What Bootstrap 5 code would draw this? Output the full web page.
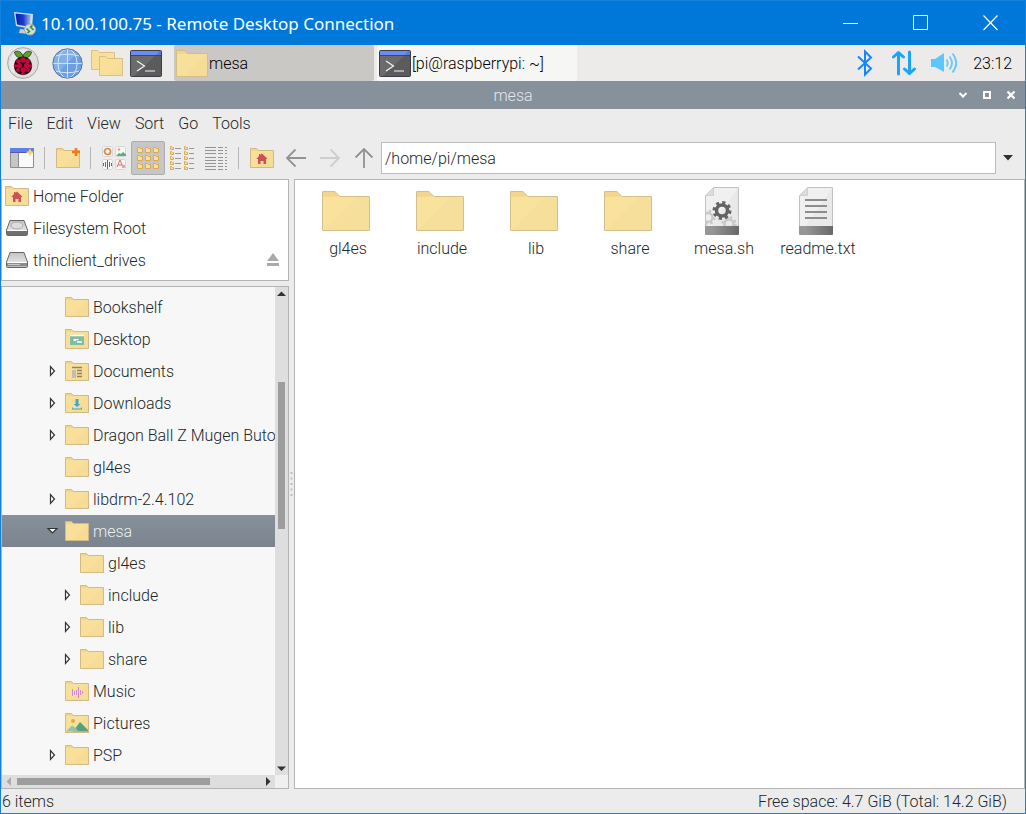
<!DOCTYPE html>
<html lang="en">
<head>
<meta charset="utf-8">
<meta name="viewport" content="width=device-width, initial-scale=1">
<title>10.100.100.75 - Remote Desktop Connection</title>
<link href="https://cdn.jsdelivr.net/npm/bootstrap@5.3.0/dist/css/bootstrap.min.css" rel="stylesheet">
<style>
body { font: 300 16px/21px Roboto, sans-serif; color: #222729; background: #ececec; }
button { font: inherit; color: inherit; border: 0; background: none; padding: 0; }
svg { display: block; flex: none; }
.rdp-window { height: 100vh; min-height: 480px; border: 1px solid #1482dc; }
.rdp-title { height: 44px; gap: 5px; padding-left: 11px; background: #0078d9; color: #fff; font: 400 17px/25px "Noto Sans", "Open Sans", sans-serif; }
.rdp-title button { width: 70px; height: 44px; }
.taskbar { height: 36px; background: #edebe9; color: #000; }
.launchers { gap: 7px; padding: 0 12px 0 6px; }
.launchers .globe { margin: 0 1px 0 6px; }
.tasks { gap: 3px; }
.task { width: 200px; height: 36px; gap: 1px; padding-left: 2px; background: #f6f6f4; border-radius: 2px; }
.task-on { background: #cac8c4; }
.tray { gap: 15px; padding-right: 13px; }
.fm-title { height: 28px; background: #87919b; color: #e4e6e8; }
.fm-controls { right: 2px; top: 0; }
.fm-controls button { width: 24px; height: 28px; }
.menus { height: 28px; }
.menus button { padding: 0 7px; }
.tools { height: 42px; padding-left: 4px; }
.tool { width: 34px; height: 34px; border: 1px solid transparent; border-radius: 2px; }
.tool-on { background: #c6c6c6; border-color: #adadad; }
.rule { width: 1px; height: 22px; background: #b5b5b5; margin: 0 6px 0 5px; }
.path-box { height: 32px; padding: 0 3px; border: 1px solid #bcbcbc; border-radius: 0; background: #fff; color: #222729; font: inherit; line-height: 20px; outline: 0; min-width: 0; }
.path-menu { width: 29px; height: 32px; padding-right: 5px; }
.work { min-height: 0; }
.side { width: 288px; gap: 5px; }
.pane { border: 1px solid #b4b4b4; }
.places { height: 102px; background: #fff; }
.place { height: 32px; gap: 4px; padding-left: 3px; text-align: left; }
.tree { min-height: 0; background: #f7f7f7; }
.branches { padding-top: 4px; }
.node { height: 32px; width: 100%; gap: 4px; padding-left: 43px; white-space: nowrap; }
.node-sub { padding-left: 58px; }
.node-on { background: linear-gradient(#87919b, #7a838e); color: #eceeef; }
.scroll-v { width: 13px; background: #dedede; }
.scroll-h { height: 13px; background: #dedede; }
.corner { width: 13px; background: #f0f0f0; }
.arrow-cell { width: 13px; height: 13px; }
.thumb-v { width: 7px; background: #9d9d9d; }
.thumb-h { height: 7px; background: #9d9d9d; }
.grip { width: 5px; }
.files { background: #fff; padding: 7px 6px; }
.file { width: 94px; gap: 3px; }
.file svg { margin-right: 4px; }
.status { height: 24px; padding: 0 18px 0 1px; }
</style>
</head>
<body>
<svg width="0" height="0" class="position-absolute" aria-hidden="true">
  <defs>
    <linearGradient id="paper" x1="0" y1="0" x2="1" y2="1"><stop offset=".5" stop-color="#f0f0f0"/><stop offset=".5" stop-color="#e9e9e9"/></linearGradient>
    <linearGradient id="foot"><stop offset=".2" stop-color="#969696"/><stop offset="1" stop-color="#686868"/></linearGradient>
    <linearGradient id="metal" x1="0" y1="0" x2="0" y2="1"><stop offset="0" stop-color="#c4c4c4"/><stop offset="1" stop-color="#f2f2f2"/></linearGradient>
    <linearGradient id="screen" x1="0" y1="0" x2="1" y2="0"><stop offset="0" stop-color="#0a1fb0"/><stop offset=".5" stop-color="#1c39c9"/><stop offset="1" stop-color="#9fc4f4"/></linearGradient>
    <clipPath id="sheet"><path d="M8 0h32v39H8z"/></clipPath>
  </defs>
  <symbol id="folder" viewBox="0 0 24 20">
    <path d="M.5 19.5V.5h6l2 2h15v17z" fill="#f8e09a"/><path d="M.5 3V.5h6l2.500 2.500z" fill="#f3d58c"/><path d="M6 19.500L22.500 3h1v16.500z" fill="#f5dc97"/><path d="M.5 19.500V.5h6l2 2h15v17z" fill="none" stroke="#d3b985"/>
  </symbol>
  <symbol id="folder-lg" viewBox="0 0 48 48">
    <path d="M.5 43V5q0-.5.5-.5h11q1 0 2 1l4 4h29q.5 0 .5.500v33q0 .5-.5.500H1q-.5 0-.5-.5z" fill="#f9e39c"/><path d="M.5 10V4.500h12l5 5z" fill="#f3d58c"/><path d="M2 43L36 9.500h11.500v34z" fill="#f6df9a"/><path d="M.5 43V5q0-.5.5-.5h11q1 0 2 1l4 4h29q.5 0 .5.500v33q0 .5-.5.500H1q-.5 0-.5-.5z" fill="none" stroke="#d3bf8d"/>
  </symbol>
  <symbol id="home" viewBox="0 0 24 20">
    <use href="#folder" width="24" height="20"/><path d="M12 5.500l5.700 5.500H16v5h-2.500v-3h-3v3H8v-5H6.300L9 8V6h1.500v1z" fill="#cc5256"/>
  </symbol>
  <symbol id="term" viewBox="0 0 32 27">
    <rect x=".5" y=".5" width="31" height="26" rx="1" fill="#5b5b5b"/><path d="M1 26V5h25L4 26z" fill="#6b6b6b"/><path d="M1 1h30v4H1z" fill="#5878dc"/><path d="M1 1h28l-3 4H1z" fill="#6a8cf4"/><path d="M.5 5.500h31" stroke="#46464e"/><rect x=".5" y=".5" width="31" height="26" rx="1" fill="none" stroke="#3b3d48"/><path d="M7 11l7.500 5L7 21M15 21h10" fill="none" stroke="#f4f4f4" stroke-width="1.200"/>
  </symbol>
  <symbol id="drive" viewBox="0 0 24 18">
    <path d="M5 1.500h14l3.500 9.500v4.500q0 1-1 1h-19q-1 0-1-1V11z" fill="url(#metal)" stroke="#666"/><path d="M2 11.500h20v4H2z" fill="#8b8b8b"/><path d="M2 11.500h20" stroke="#fff"/><path d="M3 13.500h12" stroke="#c8c8c8"/>
  </symbol>
  <symbol id="closed" viewBox="0 0 16 14"><path d="M5.500 2.500v9l4-4.500z" fill="#fff" stroke="#303436" stroke-width="1.200"/></symbol>
  <symbol id="open" viewBox="0 0 16 14"><path d="M3 4.500h9L7.500 9z" fill="#fff" stroke="#303436" stroke-width="1.200"/></symbol>
  <symbol id="page" viewBox="0 0 48 48">
    <path d="M7.500 47V8.500l8-8h25V47z" fill="url(#paper)" stroke="#c2c2c2"/><path d="M7.500 8.500h8v-8z" fill="#dcdcdc" stroke="#cfcfcf"/><path d="M7 39h34v8q0 1-1 1H8q-1 0-1-1z" fill="url(#foot)"/>
  </symbol>
</svg>

<div class="rdp-window d-flex flex-column overflow-hidden">
  <header class="rdp-title d-flex align-items-center flex-shrink-0">
    <svg width="24" height="26" viewBox="0 0 24 26">
      <path d="M2 2l19 2-1 15L4 16z" fill="#d8dde6"/><path d="M3.500 3.500L19 5l-1.500 12L5 14.500z" fill="url(#screen)"/><path d="M8 19l8 1 1 4-10-1z" fill="#c8ccd2"/><circle cx="18" cy="19.500" r="5.500" fill="#d7dcd8" stroke="#a5aaa8"/><path d="M14.500 18.500l3 3-2 1.500M21.500 20l-3-3 2-1.500" fill="none" stroke="#2f9a3c" stroke-width="1.600"/>
    </svg>
    <span class="flex-fill">10.100.100.75 - Remote Desktop Connection</span>
    <div class="d-flex">
      <button class="d-flex align-items-center justify-content-center" aria-label="Minimize"><svg width="15" height="16"><path d="M0 8.500h15" stroke="#fff"/></svg></button>
      <button class="d-flex align-items-center justify-content-center" aria-label="Maximize"><svg width="15" height="16"><path d="M.5.5h14v14H.5z" fill="none" stroke="#fff"/></svg></button>
      <button class="d-flex align-items-center justify-content-center" aria-label="Close"><svg width="15" height="16"><path d="M.5.5l14 14.500M14.500 .5L.5 15" fill="none" stroke="#fff" stroke-width="1.100"/></svg></button>
    </div>
  </header>

  <nav class="taskbar d-flex align-items-center flex-shrink-0" aria-label="Panel">
    <div class="launchers d-flex align-items-center">
    <button aria-label="Menu"><svg width="32" height="32" viewBox="0 0 32 32">
      <circle cx="16" cy="16" r="15.400" fill="#dedede" stroke="#a9a9a9"/><path d="M5.500 26.500A15 15 0 0 1 26.500 5.500z" fill="#e9e9e9"/>
      <path d="M16 9C14 3 9 4 7.500 5 8 9 11 11.500 15.500 10.500zM16 9c2-6 7-5 8.500-4-.5 4-3.500 6.500-8 5.500z" fill="#5f9d35" stroke="#1c2b10" stroke-width=".7"/>
      <path d="M16 9.500c5 0 9 4 9 9.500s-4 9-9 9-9-3.500-9-9 4-9.500 9-9.500z" fill="#230912"/>
      <g fill="#c7053d"><circle cx="16" cy="13" r="2.800"/><circle cx="11.300" cy="14.200" r="2.200"/><circle cx="20.700" cy="14.200" r="2.200"/><circle cx="12.500" cy="18.500" r="2.600"/><circle cx="19.500" cy="18.500" r="2.600"/><circle cx="8.500" cy="19" r="1.800"/><circle cx="23.500" cy="19" r="1.800"/><circle cx="16" cy="22.800" r="2.500"/><circle cx="11" cy="23" r="2"/><circle cx="21" cy="23" r="2"/><circle cx="16" cy="26.500" r="1.700"/></g>
    </svg></button>
    <button class="globe" aria-label="Web browser"><svg width="31" height="31" viewBox="0 0 31 31">
      <circle cx="15.500" cy="15.500" r="14.500" fill="#6c9fdf"/><path d="M5 25.500A14.500 14.500 0 0 1 25.500 5z" fill="#82b1e9"/><g fill="none" stroke="#d4e4f7"><path d="M15.500 1v29M1 15.500h29M3.500 8q12-3.500 24 0M3.500 23q12 3.500 24 0"/><ellipse cx="15.500" cy="15.500" rx="9.500" ry="14.500"/></g><circle cx="15.500" cy="15.500" r="14.700" fill="none" stroke="#53749f"/>
    </svg></button>
    <button aria-label="File manager"><svg width="32" height="26" viewBox="0 0 32 26"><path d="M.5 19.500V.5h6l2 2h15v17z" fill="#f8e09a" stroke="#d9c08a"/><path d="M8.500 25.500v-19h6l2 2h15v17z" fill="#f8e09a" stroke="#d9c08a"/><path d="M17 25L31 11v14z" fill="#f5dc97"/></svg></button>
    <button aria-label="Terminal"><svg width="32" height="27"><use href="#term"/></svg></button>
    </div>
    <div class="tasks d-flex">
      <button class="task task-on d-flex align-items-center"><svg width="32" height="27" viewBox="0 0 32 27"><path d="M.5 26.500V.5h8l3 3h20v23z" fill="#f8e09a"/><path d="M.5 4V.5h8l3 3.500z" fill="#f3d58c"/><path d="M8 26L30 4h1v22z" fill="#f5dc97"/><path d="M.5 26.500V.5h8l3 3h20v23z" fill="none" stroke="#d3bd88"/></svg>mesa</button>
      <button class="task d-flex align-items-center"><svg width="32" height="27"><use href="#term"/></svg>[pi@raspberrypi: ~]</button>
    </div>
    <div class="tray d-flex align-items-center ms-auto">
      <button aria-label="Bluetooth"><svg width="21" height="28" viewBox="0 0 21 28"><path d="M2 7.500l13 12-6 6V2.500l6 6-13 12" fill="none" stroke="#1187fb" stroke-width="2"/></svg></button>
      <button aria-label="Network"><svg width="24" height="26" viewBox="1 0 24 26"><g fill="none" stroke="#18a5ff" stroke-width="3" stroke-linecap="round" stroke-linejoin="round"><path d="M7.500 24V2.500M2.500 7l5-4.500 5 4.500M18.500 2v21.500M13.500 19l5 4.500 5-4.500"/></g></svg></button>
      <button aria-label="Volume"><svg width="27" height="22" viewBox="2 0 27 22"><path d="M2 7h4l9-6v19l-9-5H2z" fill="#5bc7fd"/><g fill="none" stroke="#66caff" stroke-width="1.800"><path d="M17.500 7.500q2.500 3.500 0 7M20.500 4.500q5 6.500 0 13M23.500 1.500q7.500 9.500 0 19"/></g></svg></button>
      <time>23:12</time>
    </div>
  </nav>

  <div class="fm-title position-relative d-flex align-items-center justify-content-center flex-shrink-0">mesa
    <div class="fm-controls position-absolute d-flex">
      <button class="d-flex align-items-center justify-content-center" aria-label="Iconify"><svg width="10" height="10"><path d="M1.500 3L5 6.500 8.500 3" fill="none" stroke="#fff" stroke-width="2"/></svg></button>
      <button class="d-flex align-items-center justify-content-center" aria-label="Maximize window"><svg width="10" height="10"><path d="M2 2h6v6H2z" fill="none" stroke="#fff" stroke-width="2"/></svg></button>
      <button class="d-flex align-items-center justify-content-center" aria-label="Close window"><svg width="10" height="10"><path d="M1.500 1.500l7 7M8.500 1.500l-7 7" stroke="#fff" stroke-width="2.300"/></svg></button>
    </div>
  </div>

  <nav class="menus d-flex align-items-center flex-shrink-0" aria-label="Menu bar">
    <button>File</button><button>Edit</button><button>View</button><button>Sort</button><button>Go</button><button>Tools</button>
  </nav>

  <div class="tools d-flex align-items-center flex-shrink-0" role="toolbar">
    <button class="tool d-flex align-items-center justify-content-center" aria-label="New window"><svg width="24" height="20" viewBox="0 0 24 20"><path d="M.5.5h23v19H.5z" fill="#fafafa" stroke="#8d8d8d"/><path d="M1 5h7v14H1z" fill="#c6c6c6"/><path d="M8.500 5v14" stroke="#8f8f8f"/><path d="M0 0h24v4.500H0z" fill="#5f7fea"/><path d="M0 4.500h24" stroke="#4d5da8"/><path d="M20 0l1.200 3 3 1.200-3 1.200L20 8.500l-1.200-3.100-3-1.200 3-1.200z" fill="#f8cf64"/></svg></button>
    <div class="rule"></div>
    <button class="tool d-flex align-items-center justify-content-center" aria-label="New folder"><svg width="24" height="20" viewBox="0 0 24 20"><use href="#folder"/><path d="M20 0v8M16 4h8" stroke="#f47a16" stroke-width="2.600"/></svg></button>
    <div class="rule"></div>
    <button class="tool d-flex align-items-center justify-content-center" aria-label="Thumbnail view"><svg width="24" height="24" viewBox="0 0 24 24"><g fill="#f5f5f5" stroke="#d7d7d7"><rect x=".5" y=".5" width="10" height="10" rx="1"/><rect x="13.500" y=".5" width="10" height="10" rx="1"/><rect x=".5" y="13.500" width="10" height="10" rx="1"/><rect x="13.500" y="13.500" width="10" height="10" rx="1"/></g><circle cx="5.500" cy="5.500" r="3" fill="none" stroke="#d9894a" stroke-width="1.700"/><path d="M14 10l3-3 2 1 2-2 3 2.500V10z" fill="#5daa88"/><circle cx="17" cy="3.500" r="1.200" fill="#e2a94c"/><path d="M1.500 17v3M3.500 16v5M5.500 14v9M7.500 16v5M9.500 17v3" stroke="#9c45a5"/><path d="M15 21l3-7 2.500 6M16 19h4" fill="none" stroke="#dd6f70"/><path d="M20 19h3v3h-3z" fill="#e6a29d"/></svg></button>
    <button class="tool tool-on d-flex align-items-center justify-content-center" aria-label="Icon view"><svg width="24" height="24" viewBox="0 0 24 24"><g id="mini" fill="#f8e09a" stroke="#d9aa55"><path d="M1.500 6.500v-5h2l1 1h2v4z"/><path d="M9.500 6.500v-5h2l1 1h2v4z"/><path d="M17.500 6.500v-5h2l1 1h2v4z"/></g><use href="#mini" y="8"/><use href="#mini" y="16"/></svg></button>
    <button class="tool d-flex align-items-center justify-content-center" aria-label="Compact view"><svg width="24" height="24" viewBox="0 0 24 24"><g id="compact"><path d="M.5 3.500v-3h1l1 1h1v2zM14.500 3.500v-3h1l1 1h1v2z" fill="#f8e09a" stroke="#d9aa55"/><path d="M5 2.500h6M19 2.500h5" stroke="#999"/></g><use href="#compact" y="5"/><use href="#compact" y="10"/><use href="#compact" y="15"/><use href="#compact" y="20"/></svg></button>
    <button class="tool d-flex align-items-center justify-content-center" aria-label="Detailed list"><svg width="22" height="23" viewBox="0 0 22 23"><path d="M0 .5h11m2 0h5m2 0h2M0 3.500h11m2 0h5m2 0h2M0 6.500h11m2 0h5m2 0h2M0 10.500h11m2 0h5m2 0h2M0 13.500h11m2 0h5m2 0h2M0 16.500h11m2 0h5m2 0h2M0 19.500h11m2 0h5m2 0h2M0 22.500h11m2 0h5m2 0h2" stroke="#939393"/></svg></button>
    <div class="rule"></div>
    <button class="tool d-flex align-items-center justify-content-center" aria-label="Home"><svg width="24" height="20"><use href="#home"/></svg></button>
    <button class="tool d-flex align-items-center justify-content-center" aria-label="Back"><svg width="20" height="20" viewBox="0 0 20 20"><path d="M20 10H1.500M9.500 1.500L1 10l8.500 8.500" fill="none" stroke="#929292" stroke-width="1.800"/></svg></button>
    <button class="tool d-flex align-items-center justify-content-center" aria-label="Forward"><svg width="20" height="20" viewBox="0 0 20 20"><path d="M0 10h18.500M10.500 1.500L19 10l-8.500 8.500" fill="none" stroke="#cecece" stroke-width="1.800"/></svg></button>
    <button class="tool d-flex align-items-center justify-content-center" aria-label="Up"><svg width="20" height="20" viewBox="0 0 20 20"><path d="M10 20V1.500M1.500 9.500L10 1l8.500 8.500" fill="none" stroke="#929292" stroke-width="1.800"/></svg></button>
    <input class="path-box flex-fill" type="text" value="/home/pi/mesa" aria-label="Location">
    <button class="path-menu d-flex align-items-center justify-content-center" aria-label="Recent locations"><svg width="10" height="6"><path d="M0 0h10L5 5.500z" fill="#2e3436"/></svg></button>
  </div>

  <div class="work d-flex flex-fill overflow-hidden">
    <aside class="side d-flex flex-column flex-shrink-0">
      <div class="pane places d-flex flex-column flex-shrink-0">
        <button class="place d-flex align-items-center"><svg width="24" height="20"><use href="#home"/></svg>Home Folder</button>
        <button class="place d-flex align-items-center"><svg width="24" height="18"><use href="#drive"/><ellipse cx="12" cy="6.500" rx="6" ry="3.500" fill="#ddd" stroke="#aaa"/><path d="M2 12h20v4H2z" fill="#707070"/></svg>Filesystem Root</button>
        <div class="d-flex align-items-center">
          <button class="place d-flex align-items-center flex-fill"><svg width="24" height="18"><use href="#drive"/></svg>thinclient_drives</button>
          <button class="me-2" aria-label="Eject"><svg width="14" height="14"><path d="M7 0l6 8H1zM1 10h12v3H1z" fill="#aaa"/></svg></button>
        </div>
      </div>
      <div class="pane tree d-flex flex-column flex-fill overflow-hidden">
        <div class="d-flex flex-fill overflow-hidden">
          <div class="branches flex-fill overflow-hidden">
            <button class="node d-flex align-items-center"><svg width="16" height="14"></svg><svg width="24" height="20"><use href="#folder"/></svg>Bookshelf</button>
            <button class="node d-flex align-items-center"><svg width="16" height="14"></svg><svg width="24" height="20"><use href="#folder"/><path d="M5 7h14v9H5z" fill="#7fbfa1"/><path d="M5 6.500h14" stroke="#fff" stroke-width="1.500"/><path d="M8 9.500h6v3H8z" fill="#f1f4f3" stroke="#5a9a8a" stroke-width=".5"/><path d="M11.500 11.500h6v3h-6z" fill="#e2e9e6" stroke="#5a9a8a" stroke-width=".5"/></svg>Desktop</button>
            <button class="node d-flex align-items-center"><svg width="16" height="14"><use href="#closed"/></svg><svg width="24" height="20"><use href="#folder"/><path d="M7 6.500h10M12 9.500h5M12 12.500h5M12 15.500h5" stroke="#8f8361" stroke-width="1.300"/><path d="M7 9h4v8H7z" fill="#bdbdb9"/></svg>Documents</button>
            <button class="node d-flex align-items-center"><svg width="16" height="14"><use href="#closed"/></svg><svg width="24" height="20"><use href="#folder"/><path d="M10.500 6h3v5h2L12 14l-3.500-3h2zM7 14.500h1v1h8v-1h1v2H7z" fill="#44a5cd"/></svg>Downloads</button>
            <button class="node d-flex align-items-center"><svg width="16" height="14"><use href="#closed"/></svg><svg width="24" height="20"><use href="#folder"/></svg>Dragon Ball Z Mugen Buto</button>
            <button class="node d-flex align-items-center"><svg width="16" height="14"></svg><svg width="24" height="20"><use href="#folder"/></svg>gl4es</button>
            <button class="node d-flex align-items-center"><svg width="16" height="14"><use href="#closed"/></svg><svg width="24" height="20"><use href="#folder"/></svg>libdrm-2.4.102</button>
            <button class="node node-on d-flex align-items-center"><svg width="16" height="14"><use href="#open"/></svg><svg width="24" height="20"><use href="#folder"/></svg>mesa</button>
            <button class="node node-sub d-flex align-items-center"><svg width="16" height="14"></svg><svg width="24" height="20"><use href="#folder"/></svg>gl4es</button>
            <button class="node node-sub d-flex align-items-center"><svg width="16" height="14"><use href="#closed"/></svg><svg width="24" height="20"><use href="#folder"/></svg>include</button>
            <button class="node node-sub d-flex align-items-center"><svg width="16" height="14"><use href="#closed"/></svg><svg width="24" height="20"><use href="#folder"/></svg>lib</button>
            <button class="node node-sub d-flex align-items-center"><svg width="16" height="14"><use href="#closed"/></svg><svg width="24" height="20"><use href="#folder"/></svg>share</button>
            <button class="node d-flex align-items-center"><svg width="16" height="14"></svg><svg width="24" height="20"><use href="#folder"/><path d="M7.500 8v7M9.500 10v4M11.500 9v5M13.500 6v11M15.500 9v5M17.500 10v3" stroke="#cf8bc4"/></svg>Music</button>
            <button class="node d-flex align-items-center"><svg width="16" height="14"></svg><svg width="24" height="20"><use href="#folder"/><path d="M8 18.500l7-9.500 8 8v1.500z" fill="#55a07e"/><path d="M1 18.500l6-6 3 2 4 4z" fill="#8cc7a8"/><circle cx="8" cy="8" r="2" fill="#e2a94c"/></svg>Pictures</button>
            <button class="node d-flex align-items-center"><svg width="16" height="14"><use href="#closed"/></svg><svg width="24" height="20"><use href="#folder"/></svg>PSP</button>
          </div>
          <div class="scroll-v d-flex flex-column align-items-center flex-shrink-0">
            <svg class="arrow-cell" viewBox="0 0 13 13"><path d="M2 9l4.500-4.500L11 9z" fill="#2e3436"/></svg>
            <div class="flex-fill d-flex flex-column"><div style="flex: 82"></div><div class="thumb-v" style="flex: 147"></div><div style="flex: 233"></div></div>
            <svg class="arrow-cell" viewBox="0 0 13 13"><path d="M2 4.500h9L6.500 9z" fill="#2e3436"/></svg>
          </div>
        </div>
        <div class="d-flex flex-shrink-0">
          <div class="scroll-h d-flex align-items-center flex-fill">
            <svg class="arrow-cell" viewBox="0 0 13 13"><path d="M9 2v9L4.500 6.500z" fill="#aaa"/></svg>
            <div class="flex-fill d-flex"><div style="flex: 2"></div><div class="thumb-h" style="flex: 193"></div><div style="flex: 52"></div></div>
            <svg class="arrow-cell" viewBox="0 0 13 13"><path d="M4 2v9l4.500-4.500z" fill="#2e3436"/></svg>
          </div>
          <div class="corner"></div>
        </div>
      </div>
    </aside>
    <div class="grip d-flex align-items-center justify-content-center flex-shrink-0"><svg width="3" height="24"><path d="M1.500 0v24" stroke="#bdbdbd" stroke-width="2" stroke-dasharray="2 3.500"/></svg></div>
    <main class="pane files d-flex flex-wrap align-content-start flex-fill">
      <button class="file d-flex flex-column align-items-center"><svg width="48" height="48"><use href="#folder-lg"/></svg>gl4es</button>
      <button class="file d-flex flex-column align-items-center"><svg width="48" height="48"><use href="#folder-lg"/></svg>include</button>
      <button class="file d-flex flex-column align-items-center"><svg width="48" height="48"><use href="#folder-lg"/></svg>lib</button>
      <button class="file d-flex flex-column align-items-center"><svg width="48" height="48"><use href="#folder-lg"/></svg>share</button>
      <button class="file d-flex flex-column align-items-center"><svg width="48" height="48"><use href="#page"/>
        <g fill="none" stroke="#c9c9c9" clip-path="url(#sheet)"><circle cx="10" cy="30.500" r="4.500" stroke-width="2.500"/><circle cx="10" cy="30.500" r="6.500" stroke-width="2.500" stroke-dasharray="2.550 2.550"/><circle cx="31" cy="37" r="4.500" stroke-width="2.500"/><circle cx="31" cy="37" r="6.500" stroke-width="2.500" stroke-dasharray="2.550 2.550"/></g>
        <g fill="none" stroke="#636363"><circle cx="24" cy="23.500" r="5.500" stroke-width="3.500"/><circle cx="24" cy="23.500" r="8" stroke-width="3" stroke-dasharray="3.140 3.140"/></g></svg>mesa.sh</button>
      <button class="file d-flex flex-column align-items-center"><svg width="48" height="48"><use href="#page"/><path d="M13 13h22M13 19h22M13 25h22M13 31h22" stroke="#8d8d8d" stroke-width="2"/></svg>readme.txt</button>
    </main>
  </div>

  <footer class="status d-flex align-items-center justify-content-between flex-shrink-0"><span>6 items</span><span>Free space: 4.7 GiB (Total: 14.2 GiB)</span></footer>
</div>
<script src="https://cdn.jsdelivr.net/npm/bootstrap@5.3.0/dist/js/bootstrap.bundle.min.js"></script>
</body>
</html>
